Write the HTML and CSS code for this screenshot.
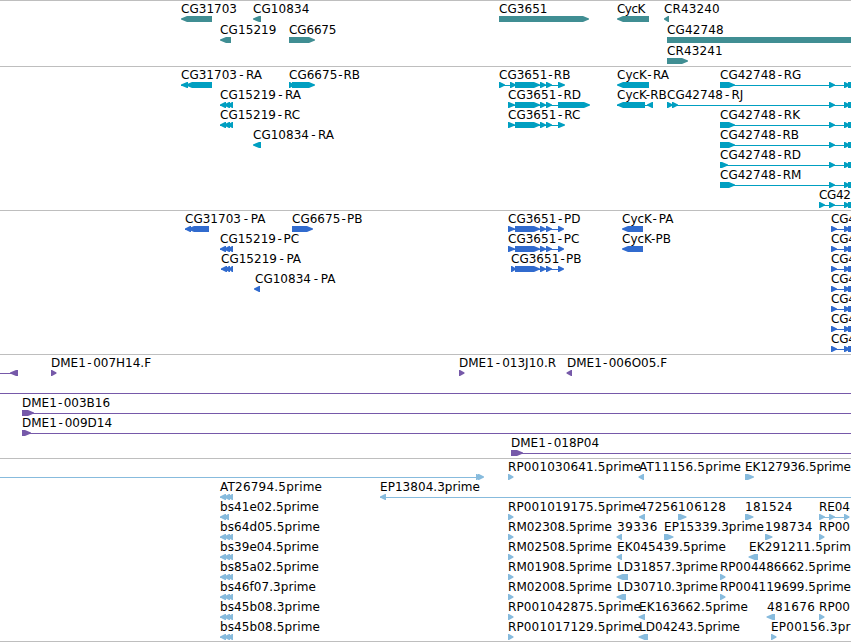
FILE: index.html
```
<!DOCTYPE html>
<html lang="en">

    <head>
        <meta charset="UTF-8">
        <meta name="viewport" content="width=device-width, initial-scale=1.0">
        <title>Genome Browser</title>
        <link rel="stylesheet" href="styles.css">
    </head>

    <body>
        <main class="browser">
            <svg class="track gene" id="gene" height="65"></svg>
            <svg class="track mrna" id="mrna" height="143"></svg>
            <svg class="track protein" id="protein" height="143"></svg>
            <svg class="track clone" id="clone" height="103"></svg>
            <svg class="track est" id="est" height="182"></svg>
        </main>

        <script src="tracks.js"></script>
    </body>

</html>
```

FILE: styles.css
```
body {
    margin: 0px;
    background-color: #ffffff;
    overflow: hidden;
}

.browser {
    display: flex;
    flex-direction: column;
    width: 851px;
    border-bottom: 1px solid #bebebe;
}

.track {
    display: block;
    width: 100%;
    flex: none;
    border-top: 1px solid #bebebe;
}

.track text {
    font-family: "DejaVu Sans", sans-serif;
    font-size: 12px;
    fill: #000000;
}

.track line {
    stroke: currentColor;
    stroke-width: 1px;
    shape-rendering: crispEdges;
}

.track polygon {
    fill: currentColor;
}

.gene {
    color: #408e93;
}

.mrna {
    color: #009fc1;
}

.protein {
    color: #316bce;
}

.clone {
    color: #7659a9;
}

.est {
    color: #87bbdd;
}
```

FILE: tracks.js
```
const SVG = "http://www.w3.org/2000/svg";
const END = 860;

// exon sets shared by several transcripts
const cg15219 = [[220, 226], [224, 230], [228, 233]];
const tail = [[829, 835], [844, 850], [848, END]];
const cg4p = [[831, 837], [844, 850], [848, END]];

// feature: [row, label, label start, label end, strand, segments]
const tracks = {
    gene: [
        [0, "CG31703", 181, 237, -1, [[181, 212]]],
        [0, "CG10834", 253, 309.3, -1, [[253, 261]]],
        [1, "CG15219", 220, 276.5, -1, [[220, 231]]],
        [1, "CG6675", 289, 336.5, 1, [[289, 315]]],
        [0, "CG3651", 499, 547.5, 1, [[499, 589]]],
        [0, "CycK", 617, 645.3, -1, [[617, 649]]],
        [0, "CR43240", 664, 719.6, -1, [[664, 669]]],
        [1, "CG42748", 667, 723.6, 1, [[667, END]]],
        [2, "CR43241", 667, 722.6, 1, [[667, 688]]]
    ],
    mrna: [
        [0, "CG31703-RA", 181, 262, -1, [[181, 188], [186, 212]]],
        [0, "CG6675-RB", 289, 360, 1, [[289, 294], [292, 315]]],
        [1, "CG15219-RA", 220, 301, -1, cg15219],
        [2, "CG15219-RC", 220, 300, -1, cg15219],
        [3, "CG10834-RA", 253, 334, -1, [[253, 261]]],
        [0, "CG3651-RB", 499, 570.3, 1, [[499, 505], [510, 516], [515, 540], [540, 546], [546, 552], [558, 565]]],
        [1, "CG3651-RD", 508, 581, 1, [[508, 515], [515, 540], [540, 546], [546, 552], [558, 590]]],
        [2, "CG3651-RC", 508, 580.3, 1, [[508, 515], [515, 540], [540, 546], [546, 552], [558, 565]]],
        [0, "CycK-RA", 617, 669, -1, [[617, 649]]],
        [1, "CycK-RB", 617, 666.8, -1, [[617, 645], [647, 653]]],
        [0, "CG42748-RG", 720, 801.3, 1, [[720, 735], ...tail]],
        [1, "CG42748-RJ", 667, 743.3, 1, [[667, 673], [672, 678], ...tail]],
        [2, "CG42748-RK", 720, 800, 1, [[720, 735], ...tail]],
        [3, "CG42748-RB", 720, 799, 1, [[720, 735], ...tail]],
        [4, "CG42748-RD", 720, 801, 1, [[720, 728], ...tail]],
        [5, "CG42748-RM", 720, 801.3, 1, [[720, 735], ...tail]],
        [6, "CG42", 819, 851, 1, [[819, 825], ...tail]]
    ],
    protein: [
        [0, "CG31703-PA", 185, 265.3, -1, [[185, 191], [188, 209]]],
        [0, "CG6675-PB", 292, 362.3, 1, [[292, 313]]],
        [1, "CG15219-PC", 220, 299, -1, cg15219],
        [2, "CG15219-PA", 221, 301, -1, [[221, 227], [225, 230], [229, 233]]],
        [3, "CG10834-PA", 255, 335.3, -1, [[254, 260]]],
        [0, "CG3651-PD", 508, 580.3, 1, [[508, 515], [515, 540], [540, 546], [546, 552], [558, 564]]],
        [1, "CG3651-PC", 508, 579.3, 1, [[508, 515], [515, 540], [540, 546], [546, 552], [558, 564]]],
        [2, "CG3651-PB", 511, 581.3, 1, [[511, 516], [515, 540], [540, 546], [546, 552], [558, 564]]],
        [0, "CycK-PA", 622, 673.3, -1, [[622, 643]]],
        [1, "CycK-PB", 622, 671, -1, [[622, 643]]],
        [0, "CG4", 831, 856, 1, cg4p],
        [1, "CG4", 831, 856, 1, cg4p],
        [2, "CG4", 831, 856, 1, cg4p],
        [3, "CG4", 831, 856, 1, cg4p],
        [4, "CG4", 831, 856, 1, cg4p],
        [5, "CG4", 831, 856, 1, cg4p],
        [6, "CG4", 831, 856, 1, cg4p]
    ],
    clone: [
        [0, "", 0, 0, -1, [[-10, -5], [10, 18]]],
        [0, "DME1-007H14.F", 51, 151, 1, [[51, 56.5]]],
        [0, "DME1-013J10.R", 459, 556, 1, [[459, 464.5]]],
        [0, "DME1-006O05.F", 567, 667, -1, [[566.5, 572]]],
        [1, "", 0, 0, 1, [[-10, -5], [END, 870]]],
        [2, "DME1-003B16", 22, 110, 1, [[22, 34], [END, 870]]],
        [3, "DME1-009D14", 22, 112, 1, [[22, 31], [END, 870]]],
        [4, "DME1-018P04", 511, 599, 1, [[511, 523], [END, 870]]]
    ],
    est: [
        [0, "", 0, 0, 1, [[-10, -5], [476, 481], [478, 484]]],
        [1, "AT26794.5prime", 220, 322, -1, cg15219],
        [2, "bs41e02.5prime", 220, 319, -1, [[220, 226], [224, 229]]],
        [3, "bs64d05.5prime", 220, 320, -1, cg15219],
        [4, "bs39e04.5prime", 220, 319, -1, cg15219],
        [5, "bs85a02.5prime", 220, 319, -1, cg15219],
        [6, "bs46f07.3prime", 220, 316, -1, cg15219],
        [7, "bs45b08.3prime", 220, 320, -1, cg15219],
        [8, "bs45b08.5prime", 220, 320, -1, cg15219],
        [1, "EP13804.3prime", 380, 480, -1, [[380, 386], [END, 870]]],
        [0, "RP001030641.5prime", 508, 641, 1, [[508, 513.5]]],
        [2, "RP001019175.5prime", 508, 641, 1, [[508, 513.5]]],
        [3, "RM02308.5prime", 508, 612, 1, [[508, 513.5]]],
        [4, "RM02508.5prime", 508, 612, 1, [[508, 513.5]]],
        [5, "RM01908.5prime", 508, 612, 1, [[508, 513.5]]],
        [6, "RM02008.5prime", 508, 612, 1, [[508, 513.5]]],
        [7, "RP001042875.5prime", 508, 641, 1, [[508, 513.5]]],
        [8, "RP001017129.5prime", 508, 641, 1, [[508, 513.5]]],
        [0, "AT11156.5prime", 639, 741, -1, [[638.5, 644]]],
        [0, "EK127936.5prime", 745, 851, 1, [[745, 754]]],
        [2, "47256", 639, 678, -1, [[639, 645]]],
        [2, "106128", 678, 726, 1, [[678, 686.5]]],
        [2, "181524", 745, 792.5, 1, [[745, 753.5]]],
        [2, "RE04", 819, 850, 1, [[819, 825], [829, 835], [844, 849.5]]],
        [3, "39336", 617, 657.3, -1, [[616.5, 622]]],
        [3, "EP15339.3prime", 664, 764, 1, [[664, 673.5]]],
        [3, "198734", 765, 812.5, 1, [[765, 772.5]]],
        [3, "RP00", 819, 850, 1, [[819, 824.5]]],
        [4, "EK045439.5prime", 617, 726, -1, [[616.5, 622]]],
        [4, "EK291211.5prim", 749, 851, -1, [[748.5, 758]]],
        [5, "LD31857.3prime", 617, 718, -1, [[616.5, 628]]],
        [5, "RP004486662.5prime", 720, 851, 1, [[720, 725.5]]],
        [6, "LD30710.3prime", 617, 718, -1, [[616.5, 626]]],
        [6, "RP004119699.5prime", 720, 851, 1, [[720, 725.5]]],
        [7, "EK163662.5prime", 639, 748, -1, [[638.5, 645]]],
        [7, "481676", 767, 815, -1, [[766.5, 775]]],
        [7, "RP00", 819, 850, 1, [[819, 824.5]]],
        [8, "LD04243.5prime", 639, 740, -1, [[638.5, 648]]],
        [8, "EP00156.3pr", 771, 850.5, 1, [[771, 776.5]]]
    ]
};

function add(parent, name, attrs) {
    const el = document.createElementNS(SVG, name);
    for (const key in attrs) {
        el.setAttribute(key, attrs[key]);
    }
    parent.appendChild(el);
    return el;
}

// box with a pointed end on the strand side
function arrow(svg, from, to, y, strand) {
    const tip = Math.min(6, to - from - 1);
    const points = strand > 0
        ? [[from, y], [to - tip, y], [to, y + 2.4], [to, y + 3.6], [to - tip, y + 6], [from, y + 6]]
        : [[to, y], [from + tip, y], [from, y + 2.4], [from, y + 3.6], [from + tip, y + 6], [to, y + 6]];
    add(svg, "polygon", { points: points.join(" ") });
}

// fit the label to its span, with a little air on both sides of the hyphen
function addLabel(svg, label, x, right, y) {
    const text = add(svg, "text", { x: x, y: y });
    text.textContent = label;
    const dash = label.indexOf("-");
    const extra = right - x - text.getComputedTextLength();
    if (dash < 0) {
        text.setAttribute("textLength", right - x);
        return;
    }
    const dx = new Array(label.length).fill(0);
    dx[dash] = extra / 2;
    dx[dash + 1] = extra / 2;
    text.setAttribute("dx", dx.join(" "));
}

for (const id in tracks) {
    const svg = document.getElementById(id);
    const pitch = id === "gene" ? 21 : 20;

    tracks[id].forEach(function([row, label, x, right, strand, segments]) {
        const y = row * pitch;
        if (segments.length > 1) {
            add(svg, "line", {
                x1: segments[0][0],
                x2: segments[segments.length - 1][1] - 1,
                y1: y + 18.5,
                y2: y + 18.5
            });
        }
        segments.forEach(function([from, to]) {
            arrow(svg, from, to, y + 15, strand);
        });
        if (label) {
            addLabel(svg, label, x, right, y + 12);
        }
    });
}
```
